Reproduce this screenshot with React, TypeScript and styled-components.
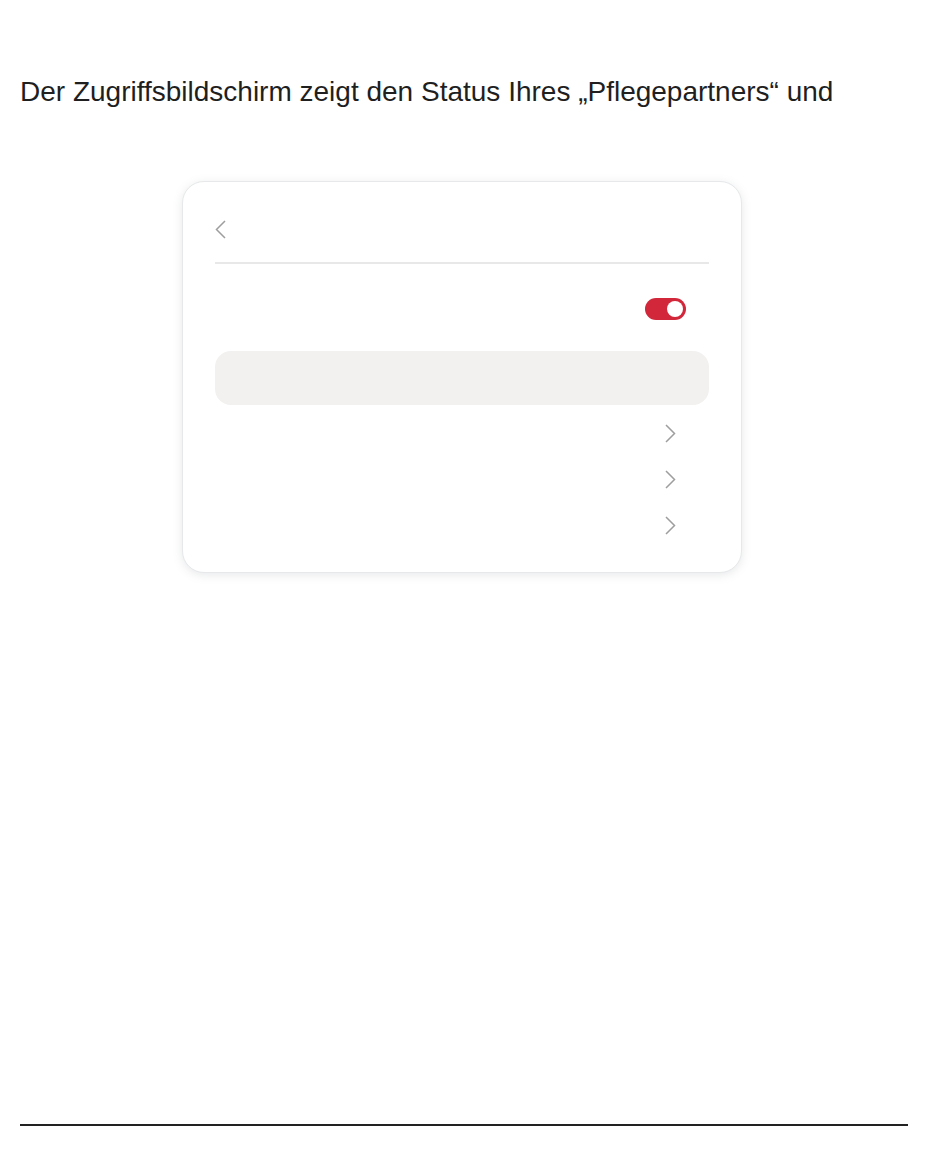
import React from 'react';
import styled, {createGlobalStyle} from 'styled-components';

const GlobalStyle = createGlobalStyle`
  body {
    margin: 0;
    background: #ffffff;
    font-family: "Liberation Sans", Arial, sans-serif;
    color: #1f1f1f;
  }
`

const Page = styled.div`
  display: flex;
  flex-direction: column;
  height: 1153px;
  box-sizing: border-box;
`

const Intro = styled.p`
  margin: 0;
  padding: 76px 0 0 20px;
  font-size: 28px;
  line-height: 32px;
  color: #1f1f1f;
`

const Card = styled.div`
  width: 560px;
  box-sizing: border-box;
  margin: 73px 0 0 182px;
  padding: 0 32px 24px;
  background: #fff;
  border: 1px solid #e6e8ea;
  border-radius: 22px;
  box-shadow: 0 2px 10px rgba(120, 130, 140, 0.18);
`

const Header = styled.div`
  display: flex;
  align-items: center;
  height: 82px;
  padding-top: 14px;
  box-sizing: border-box;
  border-bottom: 2px solid #e8e8e8;
`

const SettingRow = styled.div`
  display: flex;
  align-items: center;
  justify-content: flex-end;
  height: 44px;
  margin: 23px 0 20px;
  padding-right: 23px;
`

const Switch = styled.div<{ $on: boolean }>`
  position: relative;
  width: 41px;
  height: 22px;
  border-radius: 11px;
  background: ${p => (p.$on ? '#d2263a' : '#cfcfcf')};

  &::after {
    content: "";
    position: absolute;
    top: 3px;
    ${p => (p.$on ? 'right: 3px;' : 'left: 3px;')}
    width: 16px;
    height: 16px;
    border-radius: 50%;
    background: #fff;
  }
`

const InfoBox = styled.div`
  height: 54px;
  border-radius: 16px;
  background: #f2f1f0;
  margin-bottom: 5px;
`

const NavRow = styled.div`
  display: flex;
  align-items: center;
  justify-content: flex-end;
  height: 46px;
  padding-right: 33px;
`

const Footer = styled.div`
  display: flex;
  margin: auto 42px 27px 20px;
`

const FooterRule = styled.div<{ $w: number }>`
  width: ${p => p.$w}px;
  height: 2px;
  background: #222;
`

const Chevron = ({dir}: { dir: 'left' | 'right' }) => (
    <svg width="11" height="19" viewBox="0 0 11 19" fill="none">
        <path
            d={dir === 'left' ? 'M10 1 L1.5 9.5 L10 18' : 'M1 1 L9.5 9.5 L1 18'}
            stroke="#9e9e9e"
            strokeWidth="1.5"
        />
    </svg>
)

const App = () => {
    return (
        <>
            <GlobalStyle/>
            <Page>
                <Intro>Der Zugriffsbildschirm zeigt den Status Ihres „Pflegepartners“ und</Intro>
                <Card>
                    <Header><Chevron dir="left"/></Header>
                    <SettingRow><Switch $on/></SettingRow>
                    <InfoBox/>
                    {[0, 1, 2].map(i => (
                        <NavRow key={i}><Chevron dir="right"/></NavRow>
                    ))}
                </Card>
                <Footer>
                    <FooterRule $w={487}/>
                    <FooterRule $w={401}/>
                </Footer>
            </Page>
        </>
    )
}

export default App;
